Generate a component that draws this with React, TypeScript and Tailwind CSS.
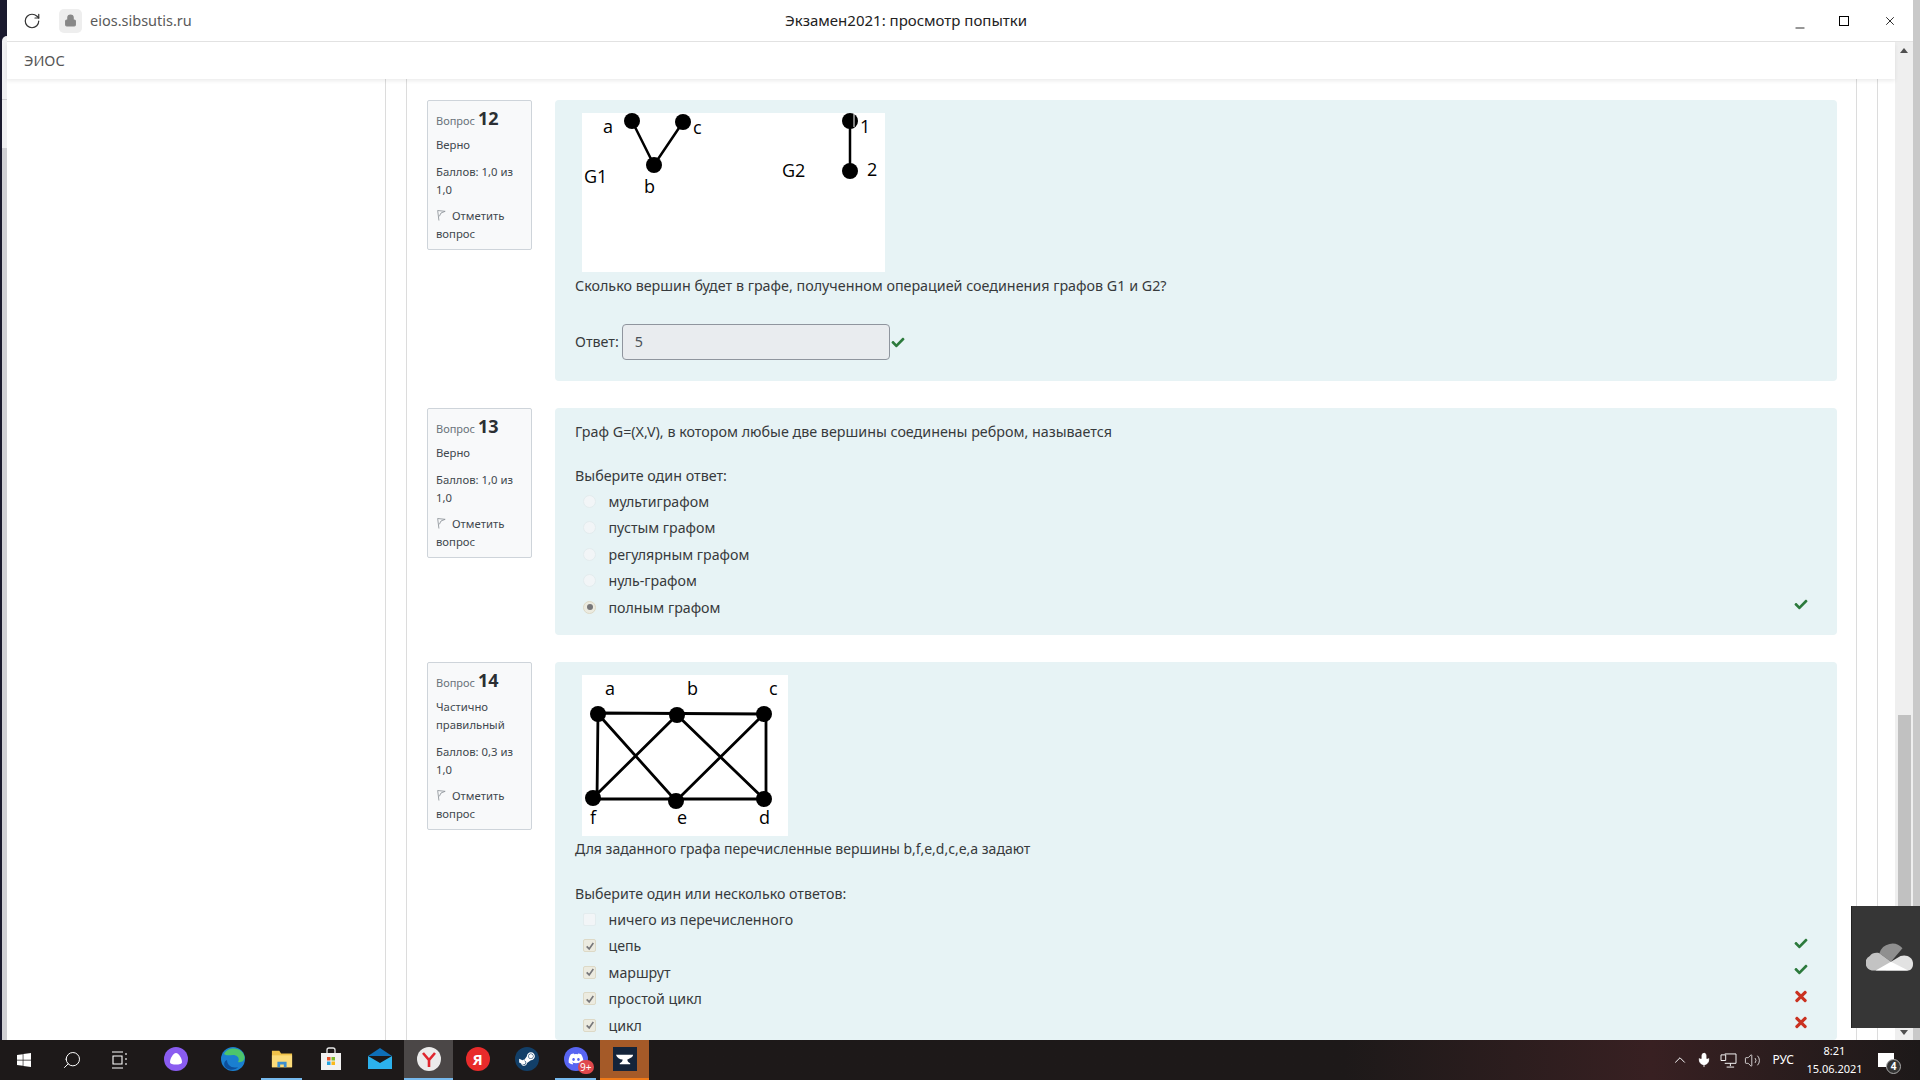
import type { ReactNode } from "react";
import { FaCheck, FaTimes, FaSteamSymbol, FaDiscord, FaWindows } from "react-icons/fa";
import { RotateCw, Lock, Search, ChevronUp, Mic, Volume2, X, Minus } from "lucide-react";

const font = "font-['Noto_Sans','Open_Sans',sans-serif]";

function Info({ n, state, score }: { n: number; state: string[]; score: string }) {
  return (
    <div className="w-[105px] shrink-0 self-start rounded-[2px] border border-[#ced4da] bg-[#f8f9fa] px-2 pt-[5px] pb-[6px] text-[11.3px] leading-[18px] text-[#41484e]">
      <div className="mb-[3px] flex items-baseline gap-[3px] leading-[24px]">
        <span className="text-[11px] text-[#6a737b]">Вопрос</span>
        <span className="text-[18px] font-bold text-[#2b2f33]">{n}</span>
      </div>
      <div>
        {state.map((s) => (
          <div key={s}>{s}</div>
        ))}
      </div>
      <div className="mt-[9px]">Баллов: {score} из 1,0</div>
      <div className="mt-[8px]">
        <svg viewBox="0 0 12 14" className="mr-[6px] inline h-[13px] w-[10px] align-[-2px]" fill="none" stroke="#8a9096" strokeWidth="1">
          <path d="M2 1 L3.5 13 M2 1 L11 2 L6 4 L4 8" />
        </svg>
        Отметить вопрос
      </div>
    </div>
  );
}

function Mark({ kind }: { kind: "ok" | "no" }) {
  return kind === "ok" ? (
    <FaCheck className="-mt-[5px] h-[13px] w-[14px] text-[#2c7a3c]" />
  ) : (
    <FaTimes className="-mt-[5px] h-[17px] w-[14px] text-[#ca3120]" />
  );
}

function Option({ label, type, checked, mark }: { label: string; type: "radio" | "check"; checked?: boolean; mark?: "ok" | "no" }) {
  return (
    <div className="flex h-[26.5px] items-center pl-[8px] pr-[9px] text-[14.2px]">
      <span
        className={`flex h-[13px] w-[13px] shrink-0 items-center justify-center border ${type === "radio" ? "rounded-full" : "rounded-[2px]"} ${
          checked ? "border-[#ddd9c6] bg-[#ecebe0]" : "border-[#e3ecee] bg-[#f2f5f7]"
        }`}
      >
        {checked && type === "radio" && <span className="h-[6px] w-[6px] rounded-full bg-[#77777a]" />}
        {checked && type === "check" && (
          <svg viewBox="0 0 12 12" className="h-[10px] w-[10px]" fill="none" stroke="#77777a" strokeWidth="2">
            <path d="M2 6.5 L5 9.5 L10 2.5" />
          </svg>
        )}
      </span>
      <span className="ml-[12.5px] flex-1">{label}</span>
      {mark && <Mark kind={mark} />}
    </div>
  );
}

function GraphOne() {
  const nodes = [
    [50, 8],
    [101, 9],
    [72, 52],
    [268, 8],
    [268, 58],
  ];
  return (
    <svg viewBox="0 0 303 159" className="ml-[7px] block h-[159px] w-[303px] bg-white" fontFamily="'Open Sans', sans-serif" fontSize="18" fill="black">
      <path d="M50 8 L72 52 L101 9 M268 8 L268 58" stroke="black" strokeWidth="2.5" fill="none" />
      {nodes.map(([x, y]) => (
        <circle key={`${x}-${y}`} cx={x} cy={y} r="8" />
      ))}
      <path d="M272 1V14" stroke="white" strokeWidth="1" />
      <text x="21" y="20">a</text>
      <text x="111" y="21">c</text>
      <text x="62" y="80">b</text>
      <text x="2" y="70">G1</text>
      <text x="200" y="64">G2</text>
      <text x="278" y="20">1</text>
      <text x="285" y="63">2</text>
    </svg>
  );
}

function GraphTwo() {
  const nodes = [
    [16, 39],
    [95, 40],
    [182, 39],
    [11, 123],
    [94, 126],
    [182, 124],
  ];
  return (
    <svg viewBox="0 0 206 161" className="ml-[7px] block h-[161px] w-[206px] bg-white" fontFamily="'Open Sans', sans-serif" fontSize="18" fill="black">
      <path
        d="M16 38 L184 39 L184 124 L11 124 M16 38 L15 124 M16 39 L94 126 L182 39 M11 123 L95 40 L182 124"
        stroke="black"
        strokeWidth="2.8"
        fill="none"
      />
      {nodes.map(([x, y]) => (
        <circle key={`${x}-${y}`} cx={x} cy={y} r="8" />
      ))}
      <text x="23" y="20">a</text>
      <text x="105" y="20">b</text>
      <text x="187" y="20">c</text>
      <text x="8" y="149">f</text>
      <text x="95" y="149">e</text>
      <text x="177" y="149">d</text>
    </svg>
  );
}

function Question({ info, children }: { info: ReactNode; children: ReactNode }) {
  return (
    <div className="flex gap-[23px]">
      {info}
      <div className="w-[1282px] rounded-[4px] bg-[#e7f3f5] px-5 text-[14.3px] text-[#373a3c]">{children}</div>
    </div>
  );
}

function TaskItem({ children, bar, className = "" }: { children: ReactNode; bar?: string; className?: string }) {
  return (
    <div className={`flex h-10 w-[49px] shrink-0 flex-col items-center ${className}`}>
      <div className="flex flex-1 items-center justify-center">{children}</div>
      <div className={`h-[2px] self-stretch ${bar ?? ""}`} />
    </div>
  );
}

export default function App() {
  return (
    <div className={`relative flex h-[1080px] w-[1920px] flex-col overflow-hidden bg-white ${font}`}>
      <div className="flex h-[1040px] overflow-hidden">
        {/* other window behind */}
        <div className="flex w-[7px] shrink-0 flex-col bg-[#1a1a2e]">
          <div className="mt-[36px] ml-[2px] h-[64px] rounded-tl-[6px] border-b border-[#cfcfd2] bg-[#f0f0f2]" />
          <div className="ml-[2px] h-[48px] bg-[#f0f0f2]" />
          <div className="ml-[2px] flex-1 bg-[#d0d0d4]" />
        </div>

        <div className="flex w-[1906px] shrink-0 flex-col bg-white">
          {/* title bar */}
          <div className="flex h-[42px] shrink-0 items-center border-b border-[#e4e4e4] text-[15px]">
            <RotateCw className="ml-[16px] h-[18px] w-[18px] text-[#333]" strokeWidth={1.6} />
            <div className="ml-[18px] flex h-[24px] w-[23px] items-center justify-center rounded-[5px] bg-[#eeeeee]">
              <Lock className="h-[13px] w-[13px] text-[#888] fill-[#888]" />
            </div>
            <span className="ml-[8px] w-[695px] text-[14.5px] text-[#5a5a5a]">eios.sibsutis.ru</span>
            <span className="w-[242px] text-center whitespace-nowrap text-[#222]">Экзамен2021: просмотр попытки</span>
            <div className="ml-auto flex items-center pr-[16px]">
              <Minus className="mt-[14px] h-[14px] w-[14px] text-black" strokeWidth={1.4} />
              <div className="ml-[32px] h-[10px] w-[10px] border border-black" />
              <X className="ml-[34px] h-[14px] w-[14px] text-black" strokeWidth={1.4} />
            </div>
          </div>

          <div className="flex min-h-0 flex-1">
            <div className="flex w-[1888px] shrink-0 flex-col">
              <div className="relative z-10 flex h-[37px] shrink-0 items-center bg-white pl-[17px] text-[14.5px] text-[#555] shadow-[0_2px_4px_rgba(0,0,0,0.08)]">
                ЭИОС
              </div>
              <div className="flex min-h-0 flex-1 overflow-hidden">
                <div className="w-[379px] shrink-0 border-r border-[#dcdcdc]" />
                <div className="w-[21px] shrink-0 border-r border-[#dcdcdc]" />
                <div className="flex w-[1430px] shrink-0 flex-col gap-[27px] pl-[20px] pt-[21px]">
                  <Question info={<Info n={12} state={["Верно"]} score="1,0" />}>
                    <div className="h-[281px]">
                      <div className="pt-[13px]">
                        <GraphOne />
                      </div>
                      <p className="mt-[4px] leading-[20px]">Сколько вершин будет в графе, полученном операцией соединения графов G1 и G2?</p>
                      <div className="mt-[28px] flex items-center">
                        <span>Ответ:</span>
                        <div className="ml-[3px] flex h-[36px] w-[268px] items-center rounded-[4px] border border-[#8f959e] bg-[#e9ecef] pl-[12px] text-[#495057]">5</div>
                        <FaCheck className="ml-[1px] h-[13px] w-[14px] text-[#2c7a3c]" />
                      </div>
                    </div>
                  </Question>
                  <Question info={<Info n={13} state={["Верно"]} score="1,0" />}>
                    <div className="h-[227px]">
                      <p className="pt-[14px] leading-[20px]">Граф G=(X,V), в котором любые две вершины соединены ребром, называется</p>
                      <p className="mt-[24px] leading-[20px]">Выберите один ответ:</p>
                      <div className="mt-[2px]">
                        <Option type="radio" label="мультиграфом" />
                        <Option type="radio" label="пустым графом" />
                        <Option type="radio" label="регулярным графом" />
                        <Option type="radio" label="нуль-графом" />
                        <Option type="radio" checked label="полным графом" mark="ok" />
                      </div>
                    </div>
                  </Question>
                  <Question info={<Info n={14} state={["Частично", "правильный"]} score="0,3" />}>
                    <div className="h-[378px]">
                      <div className="pt-[13px]">
                        <GraphTwo />
                      </div>
                      <p className="mt-[3px] text-[14px] leading-[20px]">Для заданного графа перечисленные вершины b,f,e,d,c,e,a задают</p>
                      <p className="mt-[25px] text-[14.2px] leading-[20px]">Выберите один или несколько ответов:</p>
                      <div className="mt-[2px]">
                        <Option type="check" label="ничего из перечисленного" />
                        <Option type="check" checked label="цепь" mark="ok" />
                        <Option type="check" checked label="маршрут" mark="ok" />
                        <Option type="check" checked label="простой цикл" mark="no" />
                        <Option type="check" checked label="цикл" mark="no" />
                      </div>
                    </div>
                  </Question>
                </div>
                <div className="w-[20px] shrink-0 border-r border-[#dcdcdc]" />
                <div className="w-[21px] shrink-0 border-r border-[#dcdcdc]" />
              </div>
            </div>
            {/* scrollbar */}
            <div className="flex w-[18px] shrink-0 flex-col items-center bg-[#efefef]">
              <div className="mt-[6px] h-0 w-0 border-x-[4px] border-b-[5px] border-x-transparent border-b-[#505050]" />
              <div className="mt-[662px] w-[13px] flex-1 bg-[#c1c1c1]" />
              <div className="mt-[2px] mb-[5px] h-0 w-0 border-x-[4px] border-t-[5px] border-x-transparent border-t-[#505050]" />
            </div>
          </div>
        </div>
        <div className="w-[7px] shrink-0 bg-[#c9c9c9]" />
      </div>

      {/* taskbar */}
      <div className="flex h-10 shrink-0 items-center bg-linear-to-r from-[#1d1919] from-70% via-[#382022] via-86% to-[#1d1919] text-white">
        <div className="flex w-[48px] justify-center">
          <FaWindows className="h-[16px] w-[16px]" />
        </div>
        <div className="flex w-[48px] justify-center">
          <Search className="h-[20px] w-[20px] -scale-x-100" strokeWidth={1.2} />
        </div>
        <div className="flex w-[48px] justify-center">
          <svg viewBox="0 0 18 18" className="h-[18px] w-[18px]" fill="none" stroke="white" strokeWidth="1.1">
            <path d="M1 1h11M1 17h11M2 5h9v8H2zM15 2v2M15 7v2M15 12v2" />
          </svg>
        </div>
        <div className="w-[7px]" />
        <TaskItem>
          <svg viewBox="0 0 24 24" className="h-[24px] w-[24px]">
            <circle cx="12" cy="12" r="12" fill="#8a5cf0" />
            <path d="M12 6c3 0 6 6 6 9 0 2-3 2.500-6 2.500S6 17 6 15c0-3 3-9 6-9z" fill="white" />
          </svg>
        </TaskItem>
        <div className="w-[8px]" />
        <TaskItem>
          <svg viewBox="0 0 24 24" className="h-[24px] w-[24px]">
            <circle cx="12" cy="12" r="12" fill="#1a7fd0" />
            <path d="M3 7c3-7 16-8 20 1 2 5-2 8-6 7 2-3 0-7-5-7-3 0-7 1-9-1z" fill="#4cc56c" />
            <path d="M6 13c0 5 5 9 11 7-2 3-8 4-12 1-3-3-2-7 1-8z" fill="#0c4f9c" />
          </svg>
        </TaskItem>
        <TaskItem bar="bg-[#76b9ed] mx-[4px]">
          <svg viewBox="0 0 24 24" className="h-[22px] w-[22px]">
            <path d="M1 3h8l2 3h12v15H1z" fill="#f0c24a" />
            <path d="M1 8h22v13H1z" fill="#fbdb7a" />
            <path d="M7 21v-6h10v6h-3v-3h-4v3z" fill="#3b8fd0" />
          </svg>
        </TaskItem>
        <TaskItem>
          <svg viewBox="0 0 24 24" className="h-[24px] w-[24px]">
            <path d="M8 7V3a2 2 0 012-2h4a2 2 0 012 2v4" fill="none" stroke="#e8e8e8" strokeWidth="1.3" />
            <path d="M2 6h20v17H2z" fill="#f2f2f2" />
            <path d="M8 10h3.500v3.500H8z" fill="#e8532b" />
            <path d="M12.500 10H16v3.500h-3.500z" fill="#7fba2a" />
            <path d="M8 14.500h3.500V18H8z" fill="#25a3e0" />
            <path d="M12.500 14.500H16V18h-3.500z" fill="#fbb91a" />
          </svg>
        </TaskItem>
        <TaskItem>
          <svg viewBox="0 0 24 24" className="h-[24px] w-[24px]">
            <path d="M0 9L12 1l12 8z" fill="#0e6fb8" />
            <path d="M0 9l12 7 12-7v13H0z" fill="#2cb1ec" />
          </svg>
        </TaskItem>
        <TaskItem className="bg-[#4b4747]" bar="bg-[#76b9ed]">
          <svg viewBox="0 0 24 24" className="h-[24px] w-[24px]">
            <circle cx="12" cy="12" r="12" fill="#ebebeb" />
            <path d="M6 6l6 7 6-7M12 13v7" fill="none" stroke="#e0262e" strokeWidth="2.6" />
          </svg>
        </TaskItem>
        <TaskItem>
          <div className="flex h-[24px] w-[24px] items-center justify-center rounded-full bg-[#e82b2b] text-[15px] font-bold text-white">Я</div>
        </TaskItem>
        <TaskItem>
          <div className="flex h-[24px] w-[24px] items-center justify-center rounded-full bg-[#123f68]">
            <FaSteamSymbol className="h-[18px] w-[18px] text-white" />
          </div>
        </TaskItem>
        <TaskItem bar="bg-[#76b9ed] mx-[4px]">
          <div className="relative">
            <div className="flex h-[24px] w-[24px] items-center justify-center rounded-full bg-[#5865f2]">
              <FaDiscord className="h-[16px] w-[16px] text-white" />
            </div>
            <span className="absolute -right-[6px] -bottom-[3px] rounded-full bg-[#e0484c] px-[2px] text-[10px] leading-[14px] text-white">9+</span>
          </div>
        </TaskItem>
        <TaskItem className="bg-[#a55a28]" bar="bg-[#f07a18]">
          <div className="flex h-[24px] w-[24px] items-center justify-center bg-[#14243a]">
            <svg viewBox="0 0 20 20" className="h-[19px] w-[19px]" fill="white">
              <path d="M1 5h18c0 3-4 4-6 5 0 2 1 3 3 4v1H5v-1c2-1 3-2 3-4C5 10 2 8 1 5z" />
            </svg>
          </div>
        </TaskItem>

        <div className="ml-auto flex items-center">
          <ChevronUp className="h-[18px] w-[18px]" strokeWidth={1.3} />
          <Mic className="ml-[7px] h-[16px] w-[16px] fill-white" strokeWidth={1.3} />
          <svg viewBox="0 0 18 16" className="ml-[8px] h-[15px] w-[17px]" fill="none" stroke="white" strokeWidth="1">
            <path d="M5 1h12v10H5M1 2h5v6H1zM11 11v3M7 15h8" />
          </svg>
          <Volume2 className="ml-[7px] h-[17px] w-[17px]" strokeWidth={1.1} />
          <span className="ml-[11px] text-[12px]">РУС</span>
          <div className="ml-[9px] w-[63px] text-center text-[11px] leading-[18px]">
            <div>8:21</div>
            <div>15.06.2021</div>
          </div>
          <div className="relative ml-[12px] mr-[26px] h-[14px] w-[16px] bg-white">
            <span className="absolute -right-[7px] -bottom-[7px] flex h-[15px] w-[15px] items-center justify-center rounded-full border border-[#aaa] bg-[#333] text-[10px] font-bold">4</span>
          </div>
        </div>
      </div>

      {/* OneDrive flyout */}
      <div className="absolute top-[906px] right-0 flex h-[122px] w-[69px] items-start justify-start border-l border-[#222] bg-[#363636] pt-[35px] pl-[14px]">
        <svg viewBox="0 0 50 32" className="h-[32px] w-[48px]">
          <path d="M14 12a14 14 0 0124-5l-12 14z" fill="#8f8f8f" />
          <path d="M6 30a8 8 0 01-2-15c2-3 6-4 10-3l12 9-6 9z" fill="#c3c3c3" />
          <path d="M26 21l10-6c6-2 13 1 13 8 0 4-2 7-5 7H20z" fill="#e2e2e2" />
          <path d="M10 30l16-9 18 9z" fill="white" />
        </svg>
      </div>
    </div>
  );
}
